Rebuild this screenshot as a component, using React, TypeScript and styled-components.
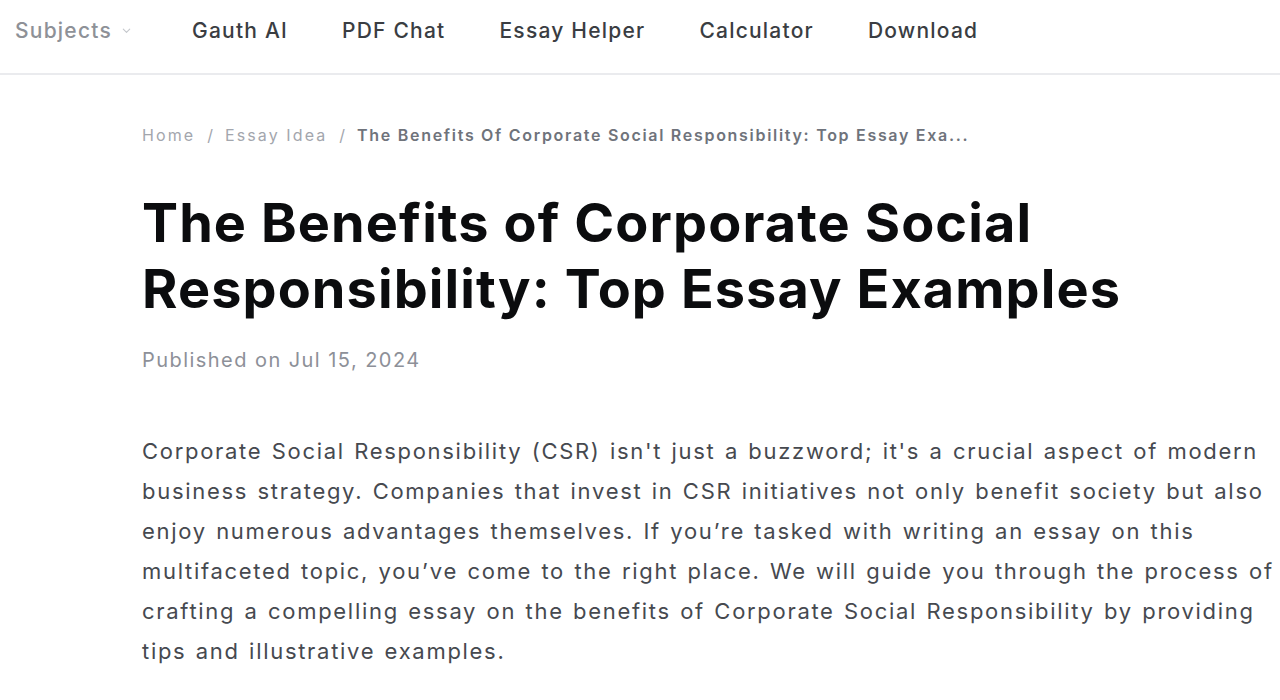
import React from "react";
import styled, { createGlobalStyle } from "styled-components";

const Global = createGlobalStyle`
  html, body { margin: 0; padding: 0; background: #fff; }
  body { font-family: Inter, "Noto Sans", sans-serif; }
  * { box-sizing: border-box; }
`;

const Header = styled.header`
  height: 75px;
  border-bottom: 2px solid #eaebee;
  display: flex;
  align-items: center;
  padding: 0 15px 13px;
`;

const Nav = styled.nav`
  display: flex;
  align-items: center;
  gap: 54px;
`;

const NavItem = styled.a<{ $muted?: boolean }>`
  display: flex;
  align-items: center;
  gap: 9px;
  font-size: 21px;
  font-weight: 500;
  letter-spacing: 1.22px;
  color: ${(p) => (p.$muted ? "#8e9197" : "#3a3d42")};
  text-decoration: none;
`;

const ChevronBox = styled.span`
  display: flex;
  margin-right: 6px;
`;

const Main = styled.main`
  padding: 50px 0 0 142px;
`;

const Crumbs = styled.div`
  display: flex;
  align-items: center;
  gap: 12px;
  font-size: 16px;
  color: #a3a6ad;
`;

const Crumb = styled.span<{ $current?: boolean }>`
  color: ${(p) => (p.$current ? "#6f737b" : "#a3a6ad")};
  font-weight: ${(p) => (p.$current ? 600 : 400)};
  letter-spacing: ${(p) => (p.$current ? "1.7px" : "2.1px")};
`;

const Title = styled.h1`
  margin: 45px 0 0;
  font-size: 54px;
  line-height: 66px;
  font-weight: 700;
  color: #0b0c0e;
  letter-spacing: 1.1px;
`;

const Meta = styled.div`
  margin-top: 26px;
  font-size: 20px;
  line-height: 24px;
  letter-spacing: 1.45px;
  color: #8d9098;
`;

const Body = styled.p`
  margin: 59px 0 0;
  font-size: 22px;
  line-height: 40px;
  letter-spacing: 1.7px;
  word-spacing: 1.5px;
  color: #46494f;
`;

const Chevron = () => (
  <svg width="11" height="11" viewBox="0 0 12 12" fill="none">
    <path d="M2.5 4.5 L6 8 L9.5 4.5" stroke="#c4c7cc" strokeWidth="1.2" strokeLinecap="round" strokeLinejoin="round" />
  </svg>
);

export default function App() {
  return (
    <>
      <Global />
      <Header>
        <Nav>
          <NavItem $muted>
            Subjects
            <ChevronBox>
              <Chevron />
            </ChevronBox>
          </NavItem>
          <NavItem>Gauth AI</NavItem>
          <NavItem>PDF Chat</NavItem>
          <NavItem>Essay Helper</NavItem>
          <NavItem>Calculator</NavItem>
          <NavItem>Download</NavItem>
        </Nav>
      </Header>
      <Main>
        <Crumbs>
          <Crumb>Home</Crumb>
          <span>/</span>
          <Crumb>Essay Idea</Crumb>
          <span>/</span>
          <Crumb $current>The Benefits Of Corporate Social Responsibility: Top Essay Exa...</Crumb>
        </Crumbs>
        <Title>
          The Benefits of Corporate Social
          <br />
          Responsibility: Top Essay Examples
        </Title>
        <Meta>Published on Jul 15, 2024</Meta>
        <Body>
          Corporate Social Responsibility (CSR) isn't just a buzzword; it's a crucial aspect of modern business
          strategy. Companies that invest in CSR initiatives not only benefit society but also enjoy numerous
          advantages themselves. If you’re tasked with writing an essay on this multifaceted topic, you’ve come to
          the right place. We will guide you through the process of crafting a compelling essay on the benefits of
          Corporate Social Responsibility by providing tips and illustrative examples.
        </Body>
      </Main>
    </>
  );
}
